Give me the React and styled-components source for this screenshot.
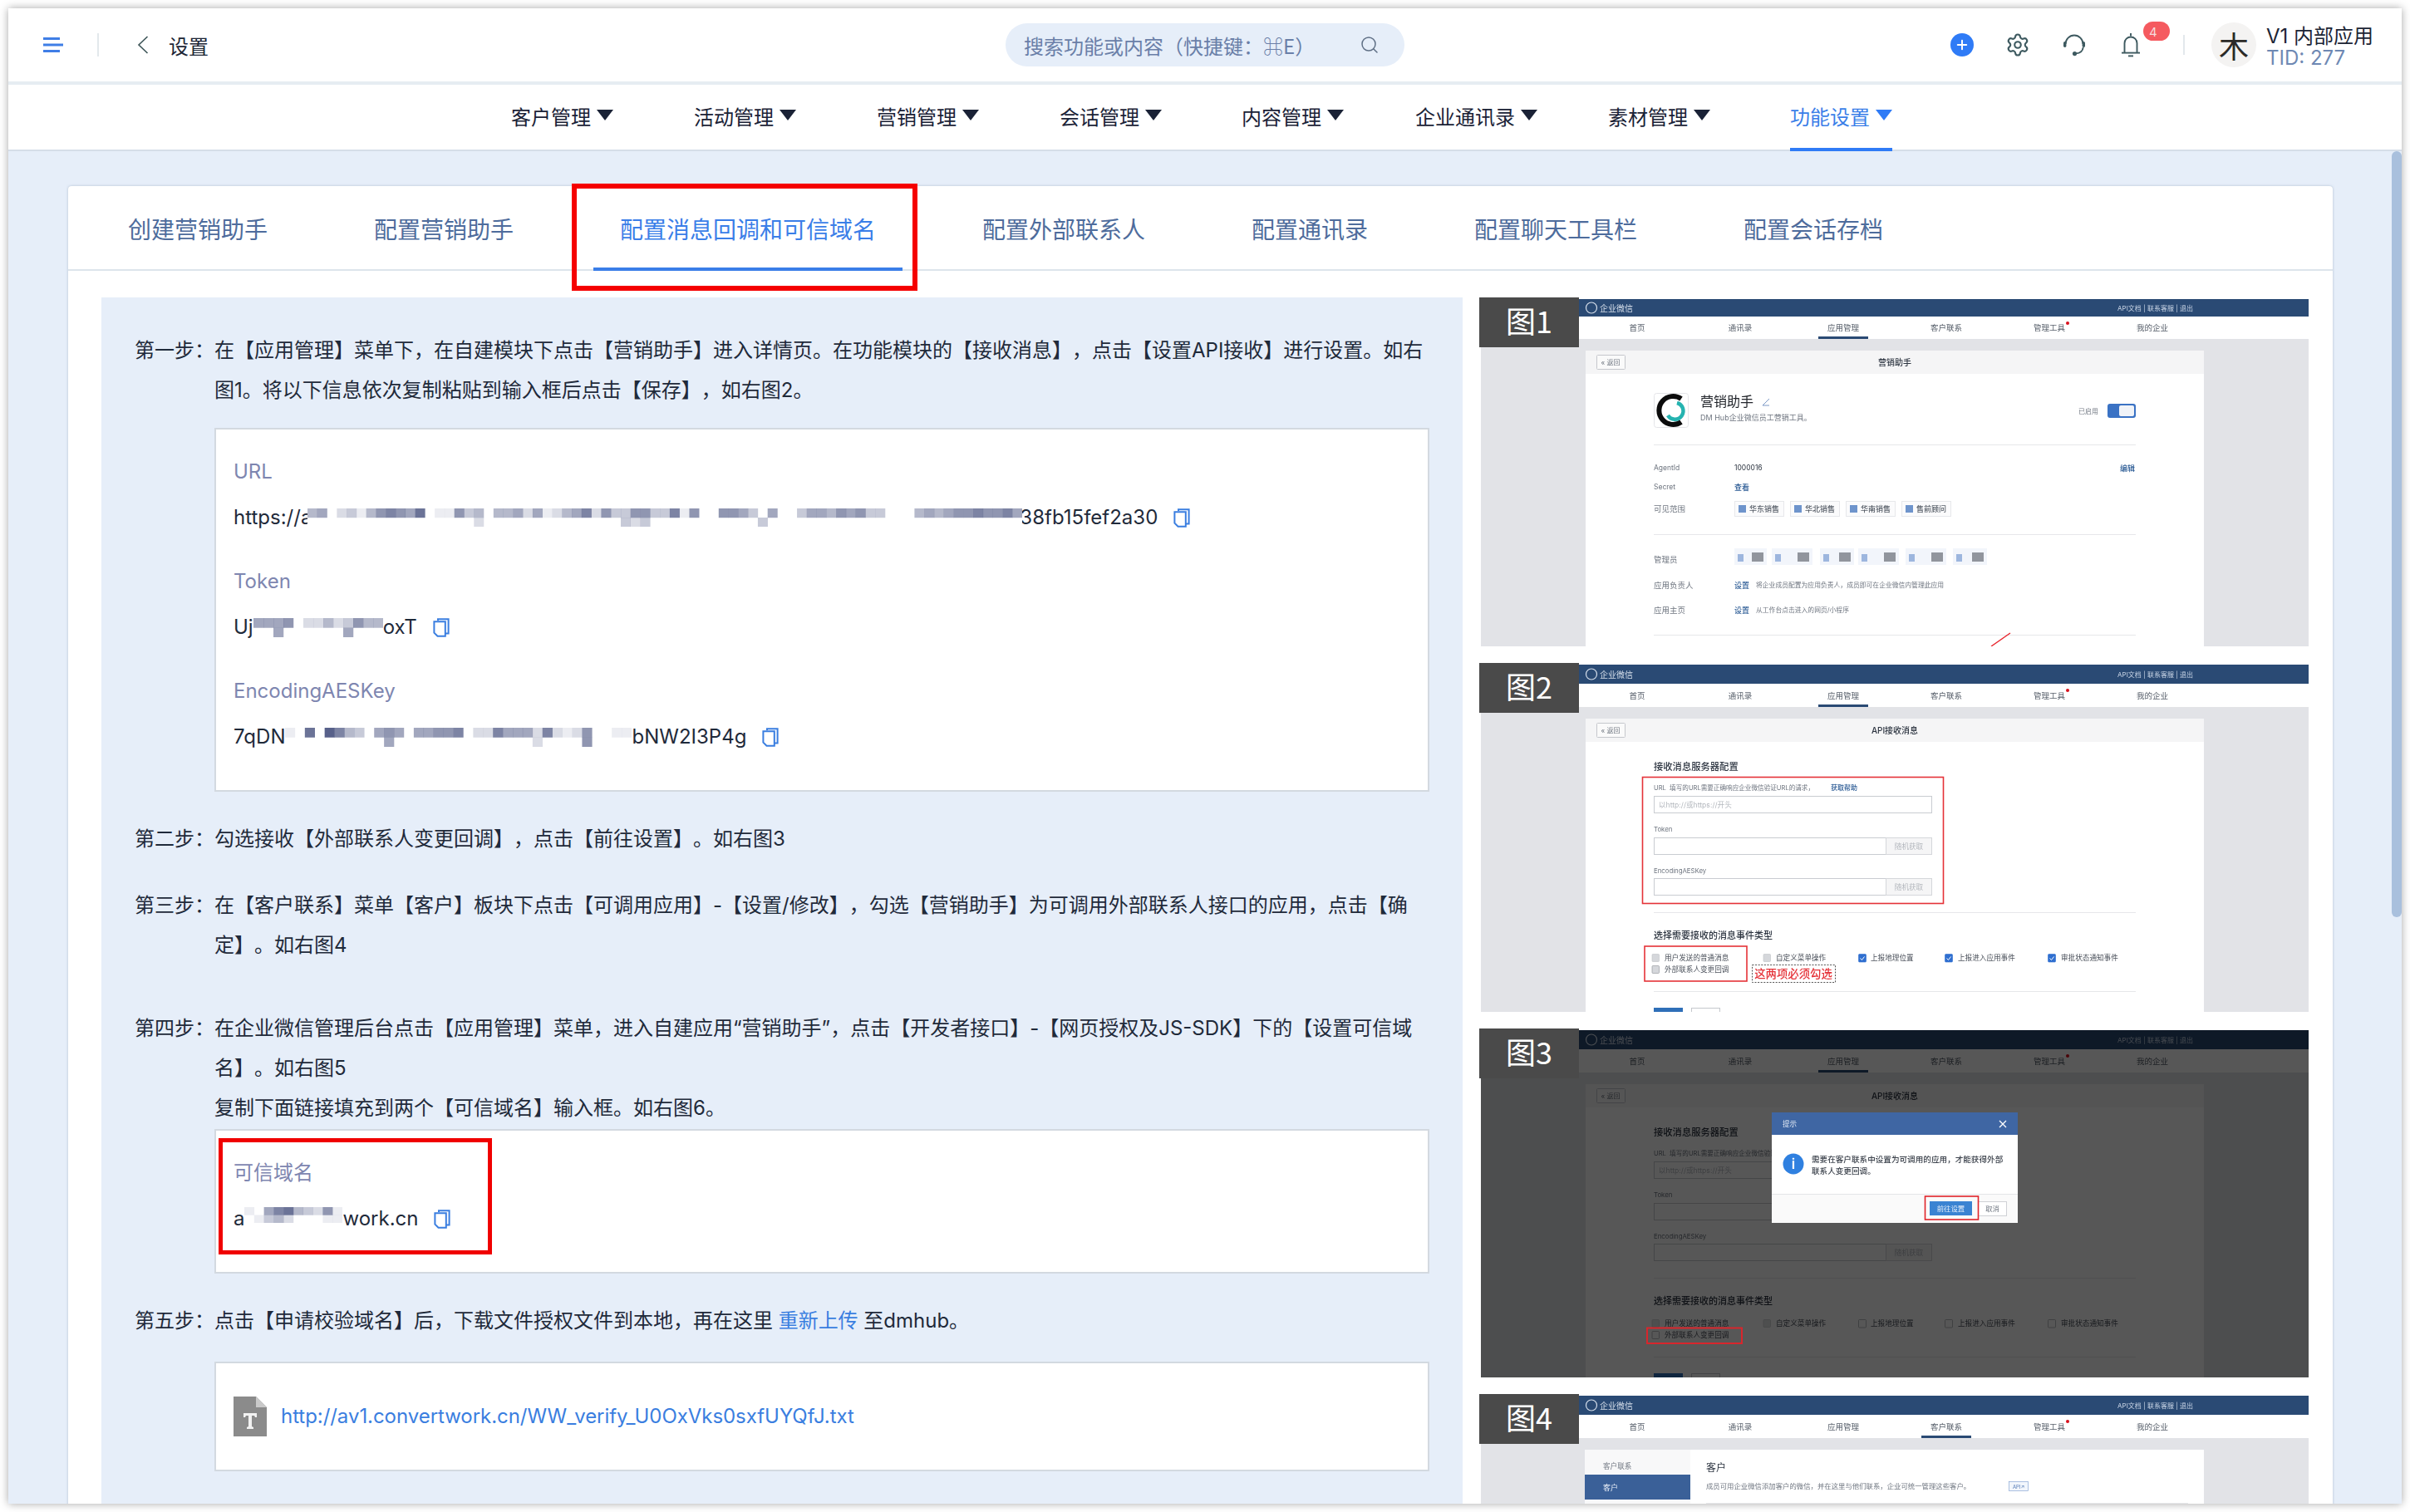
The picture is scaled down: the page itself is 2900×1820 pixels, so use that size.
import React from "react";
import styled, { createGlobalStyle } from "styled-components";
import { Search, Settings, Plus } from "lucide-react";

const FONT = `Inter, "Noto Sans CJK SC", sans-serif`;
const CJK = `"Noto Sans CJK SC", sans-serif`;

const Global = createGlobalStyle`
  html, body { margin: 0; padding: 0; background: #fff; }
  body { width: 2900px; height: 1820px; overflow: hidden; font-family: ${FONT}; text-spacing-trim: space-all; }
  * { box-sizing: border-box; }
`;

const Frame = styled.div`
  width: 2900px;
  height: 1820px;
  padding: 10px;
`;
const Window = styled.div`
  position: relative;
  width: 2880px;
  height: 1800px;
  overflow: hidden;
  background: #e6eef9;
  box-shadow: 0 0 10px rgba(0, 0, 0, 0.35);
  display: flex;
  flex-direction: column;
`;

/* top bar */
const Header = styled.header`
  height: 92px;
  flex: none;
  background: #fff;
  border-bottom: 4px solid #e6edf2;
  display: flex;
  align-items: center;
`;
const HeaderLeft = styled.div`
  flex: 1;
  display: flex;
  align-items: center;
`;
const MenuIcon = styled.svg`
  width: 24px;
  height: 18px;
  margin-left: 42px;
  flex: none;
`;
const Divider = styled.span`
  width: 2px;
  height: ${(p) => p.$h}px;
  margin-left: ${(p) => p.$left}px;
  background: #e3e8ec;
  flex: none;
`;
const BackIcon = styled.svg`
  width: 14px;
  height: 22px;
  margin-left: 46px;
  flex: none;
  fill: none;
  stroke: #3d5558;
  stroke-width: 1.6;
`;
const BackTitle = styled.span`
  font-size: 24px;
  color: #1c2535;
  margin-left: 24px;
`;
const SearchBox = styled.div`
  width: 480px;
  height: 52px;
  border-radius: 26px;
  background: #e6eef9;
  display: flex;
  align-items: center;
  justify-content: space-between;
  padding: 0 30px 0 22px;
  font-size: 24px;
  color: #6a7fa8;
  font-family: ${CJK};
`;
const HeaderRight = styled.div`
  flex: 1;
  display: flex;
  align-items: center;
  justify-content: flex-end;
`;
const IconSlot = styled.span`
  position: relative;
  width: 30px;
  height: 30px;
  margin-left: 38px;
  display: flex;
  align-items: center;
  justify-content: center;
  color: #3e5a60;
`;
const PlusDot = styled.span`
  width: 28px;
  height: 28px;
  border-radius: 50%;
  background: #2f7bf6;
  color: #fff;
  display: flex;
  align-items: center;
  justify-content: center;
`;
const Badge = styled.span`
  position: absolute;
  left: 30px;
  top: -13px;
  width: 32px;
  height: 23px;
  border-radius: 12px;
  background: #f55a5f;
  color: #f6dcdc;
  font-size: 15px;
  line-height: 25px;
  padding-left: 7px;
`;
const Avatar = styled.span`
  width: 54px;
  height: 54px;
  border-radius: 50%;
  background: #f4f3f2;
  margin: 0 12px 0 32px;
  display: flex;
  align-items: center;
  justify-content: center;
  font-family: ${CJK};
  font-size: 36px;
  color: #2b2a28;
`;
const User = styled.div`
  width: 134px;
  margin-right: 29px;
  padding-top: 6px;
  white-space: nowrap;
`;
const UserName = styled.div`
  font-size: 24px;
  line-height: 26px;
  color: #1c2535;
`;
const UserTid = styled.div`
  font-size: 24px;
  line-height: 26px;
  color: #6e88b3;
`;

/* section nav */
const Nav = styled.nav`
  height: 80px;
  flex: none;
  background: #fff;
  border-bottom: 2px solid #d5dee8;
  display: flex;
  padding-left: 605px;
`;
const NavItem = styled.div`
  height: 80px;
  margin-left: ${(p) => p.$gap}px;
  display: flex;
  align-items: center;
  gap: 7px;
  padding-bottom: 2px;
  font-family: ${CJK};
  font-size: 24px;
  color: ${(p) => (p.$active ? "#3a7ee8" : "#1a2236")};
  border-bottom: 4px solid ${(p) => (p.$active ? "#2f7bf6" : "transparent")};
`;
const Caret = styled.i`
  width: 0;
  height: 0;
  margin-top: -2px;
  border-left: 10px solid transparent;
  border-right: 10px solid transparent;
  border-top: 13px solid ${(p) => (p.$active ? "#2f7bf6" : "#1a2236")};
`;

/* main */
const Content = styled.main`
  flex: 1;
  padding: 42px 83px 0 72px;
`;
const Scrollbar = styled.div`
  position: absolute;
  right: 0;
  top: 172px;
  width: 12px;
  height: 922px;
  border-radius: 6px;
  background: #a9c0dd;
`;
const Card = styled.section`
  background: #fff;
  border-radius: 4px;
  box-shadow: 0 0 3px rgba(120, 140, 165, 0.5);
`;
const Tabs = styled.div`
  height: 102px;
  padding-left: 40px;
  display: flex;
  gap: 64px;
  box-shadow: inset 0 -2px 0 #dce5ec;
`;
const Tab = styled.div`
  position: relative;
  height: 102px;
  padding: 3px 32px 0;
  display: flex;
  align-items: center;
  font-family: ${CJK};
  font-size: 28px;
  white-space: nowrap;
  color: ${(p) => (p.$active ? "#3a7ee8" : "#4e6c9c")};
  border-bottom: 4px solid ${(p) => (p.$active ? "#3a7ee8" : "transparent")};
`;
const TabMark = styled.span`
  position: absolute;
  left: -26px;
  right: -18px;
  top: -3px;
  height: 129px;
  border: 6px solid #f50000;
  pointer-events: none;
`;
const Columns = styled.div`
  display: flex;
  gap: 20px;
  padding: 32px 0 0 40px;
`;
const Panel = styled.div`
  width: 1638px;
  height: 1500px;
  flex: none;
  background: #e6eef9;
  padding: 40px 40px 0;
  font-size: 24px;
  line-height: 48px;
  color: #1f2a3a;
  font-family: ${FONT};
`;
const Step = styled.div`
  display: flex;
  margin-top: ${(p) => p.$top || 0}px;
  white-space: nowrap;
`;
const StepLabel = styled.span`
  width: 96px;
  flex: none;
`;
const StepBody = styled.div`
  flex: 1;
`;
const Link = styled.a`
  color: #3a7ee0;
  letter-spacing: -0.05px;
`;
const InfoBox = styled.div`
  position: relative;
  margin: ${(p) => p.$top}px 0 0 96px;
  width: 1462px;
  height: ${(p) => p.$h}px;
  background: #fff;
  border: 2px solid #d3d9e0;
  padding: ${(p) => p.$pad}px 21px 0;
`;
const Field = styled.div`
  height: 132px;
`;
const FieldLabel = styled.div`
  height: 24px;
  line-height: 24px;
  margin-bottom: 31px;
  color: #7e86b0;
  white-space: nowrap;
`;
const FieldValue = styled.div`
  display: flex;
  align-items: center;
  height: 24px;
  line-height: 24px;
  color: #1f2a3a;
  white-space: nowrap;
`;
const CopyBtn = styled.svg`
  width: 20px;
  height: 23px;
  margin-left: 19px;
  flex: none;
  fill: none;
  stroke: #3a7ee0;
  stroke-width: 2;
`;
const Blurred = styled.svg`
  position: relative;
  flex: none;
  display: block;
  width: ${(p) => p.$w}px;
  height: ${(p) => p.$h}px;
  margin: ${(p) => p.$lift || 0}px ${(p) => p.$after || 0}px 0 ${(p) => p.$before || 0}px;
  background: #fff;
  filter: blur(0.6px);
`;
const DomainMark = styled.span`
  position: absolute;
  left: 3px;
  top: 9px;
  width: 329px;
  height: 140px;
  border: 5px solid #f00000;
  pointer-events: none;
`;
const FileRow = styled.div`
  display: flex;
  align-items: center;
  gap: 17px;
  line-height: 48px;
`;
const FileIcon = styled.svg`
  width: 40px;
  height: 48px;
  flex: none;
`;

/* captioned figures */
const Figures = styled.div`
  display: flex;
  flex-direction: column;
  gap: 22px;
  padding: 2px 0 0 2px;
`;
const Figure = styled.figure`
  position: relative;
  margin: 0;
  width: 996px;
  height: 418px;
  flex: none;
`;
const FigureTag = styled.figcaption`
  position: absolute;
  left: -2px;
  top: -2px;
  width: 120px;
  height: 60px;
  background: #4a4a4a;
  color: #fff;
  font-family: ${CJK};
  font-size: 36px;
  line-height: 54px;
  text-align: center;
`;
const Shot = styled.svg`
  display: block;
  width: 996px;
  height: 418px;
  filter: blur(0.5px);
`;
const T = styled.text`
  font-family: ${FONT};
  font-size: ${(p) => p.$s || 8.5}px;
  font-weight: ${(p) => p.$w || 400};
  fill: ${(p) => p.$c || "#6f7680"};
  text-anchor: ${(p) => p.$a || "start"};
  dominant-baseline: central;
`;

const NAV = [
  ["客户管理", 0],
  ["活动管理", 97],
  ["营销管理", 97],
  ["会话管理", 97],
  ["内容管理", 96],
  ["企业通讯录", 86],
  ["素材管理", 85],
  ["功能设置", 96, true],
];
const TABS = ["创建营销助手", "配置营销助手", "配置消息回调和可信域名", "配置外部联系人", "配置通讯录", "配置聊天工具栏", "配置会话存档"];

// pixelated redaction block; every digit is the darkness of one cell
function Mosaic({ rows, w, h, lift, before, after }) {
  const cols = Math.max(...rows.map((r) => r.length));
  return (
    <Blurred $w={w} $h={h} $lift={lift} $before={before} $after={after} viewBox={`0 0 ${cols} ${rows.length}`} preserveAspectRatio="none">
      {rows.map((row, y) =>
        row.split("").map((d, x) =>
          d === "0" ? null : <rect key={`${x}-${y}`} x={x} y={y} width="1.02" height="1.02" fill="#46507d" fillOpacity={+d / 10} />
        )
      )}
    </Blurred>
  );
}

function CopyIcon() {
  return (
    <CopyBtn viewBox="0 0 20 23">
      <path d="M6 3V1.2h12.6v17.4H15" />
      <path d="M1.4 4.2h13.4v17.6H5.5L1.4 17.6z" />
    </CopyBtn>
  );
}

const SHOT_NAV = ["首页", "通讯录", "应用管理", "客户联系", "管理工具", "我的企业"];
const SHOT_X = [188, 312, 436, 560, 684, 808];

// the shared chrome of the admin console shown in each figure
function ConsoleChrome({ barH, navEnd, active, title, panelTop, headEnd, showPanel = true }) {
  const textY = (barH + navEnd) / 2;
  return (
    <>
      <rect width="996" height="418" fill="#e2e3e7" />
      <rect width="996" height={barH} fill="#2a4a74" />
      <rect y={barH} width="996" height={navEnd - barH} fill="#fff" />
      <circle cx="133" cy={barH / 2} r="6.5" fill="none" stroke="#d5deea" strokeWidth="1.2" />
      <T x="143" y={barH / 2} $s={10} $c="#d5deea">企业微信</T>
      <T x="766" y={barH / 2} $s={8} $c="#c9d5e6">API文档 | 联系客服 | 退出</T>
      {SHOT_NAV.map((n, i) => (
        <T key={n} x={SHOT_X[i]} y={textY} $s={9.5} $a="middle" $c="#58606b">{n}</T>
      ))}
      <circle cx="706" cy={barH + 8} r="2" fill="#d8101c" />
      <rect x={SHOT_X[active] - 30} y={navEnd - 3} width="60" height="3" fill="#2a4a74" />
      {showPanel && (
        <>
          <rect x="126" y={panelTop} width="744" height={418 - panelTop} fill="#fff" />
          <rect x="126" y={panelTop} width="744" height={headEnd - panelTop} fill="#f5f5f6" />
          <rect x="139.5" y={panelTop + 5.5} width="34" height="17" rx="1" fill="#fafafa" stroke="#c5c7cc" />
          <T x="156" y={panelTop + 14} $s={8} $a="middle">« 返回</T>
          <T x="498" y={panelTop + 14} $s={10} $a="middle" $c="#2c3440" $w={500}>{title}</T>
        </>
      )}
    </>
  );
}

function Hr({ y }) {
  return <rect x="208" y={y} width="580" height="1" fill="#e6e7ea" />;
}

function AssistantPage() {
  const chips = [[305, "华东销售"], [372, "华北销售"], [439, "华南销售"], [506, "售前顾问"]];
  const admins = [[305, 39], [350, 49], [408, 41], [454, 49], [511, 49], [568, 41]];
  return (
    <Shot viewBox="0 0 996 418">
      <ConsoleChrome barH={21} navEnd={48} active={2} title="营销助手" panelTop={62} headEnd={90} />
      <rect x="208.5" y="113.5" width="41" height="41" rx="3" fill="#fff" stroke="#e4e5e8" />
      <path d="M241 120a17 17 0 1 0 0 28" fill="none" stroke="#0c0c0c" strokeWidth="6" />
      <path d="M236 125a10 10 0 1 1-11 15" fill="none" stroke="#25b3b0" strokeWidth="4.5" />
      <T x="264" y="123" $s={16} $c="#23262c">营销助手</T>
      <path d="M339 128l8-8M339 128h8" stroke="#5a7fb8" strokeWidth="0.8" />
      <T x="264" y="142" $s={9}>DM Hub企业微信员工营销工具。</T>
      <T x="719" y="135" $s={8}>已启用</T>
      <rect x="754" y="126" width="34" height="17" rx="3" fill="#3a72c4" />
      <rect x="768" y="128" width="18" height="13" rx="2" fill="#f0f3f8" />
      <Hr y={175} />
      <T x="208" y="203" $s={8.5}>AgentId</T>
      <T x="305" y="203" $s={8.5} $c="#2c3440">1000016</T>
      <T x="769" y="203" $s={9} $c="#2a5a94" $w={500}>编辑</T>
      <T x="208" y="226" $s={8.5}>Secret</T>
      <T x="305" y="226" $s={9} $c="#2a5a94" $w={500}>查看</T>
      <T x="208" y="252" $s={9.5}>可见范围</T>
      {chips.map(([x, label]) => (
        <g key={label}>
          <rect x={x + 0.5} y="243.5" width="59" height="18" fill="#fbfbfc" stroke="#e7e8eb" />
          <rect x={x + 5} y="248" width="9" height="9" fill="#6e94cc" />
          <T x={x + 18} y="252.5" $s={9} $c="#555c66" $w={500}>{label}</T>
        </g>
      ))}
      <Hr y={283} />
      <T x="208" y="313" $s={9.5}>管理员</T>
      {admins.map(([x, w]) => (
        <g key={x}>
          <rect x={x} y="300" width={w} height="20" fill="#f2f5fb" />
          <rect x={x + 4} y="307" width="7" height="9" fill="#9db6de" />
          <rect x={x + w - 18} y="305" width="14" height="11" fill="#70747d" opacity="0.75" />
        </g>
      ))}
      <T x="208" y="344" $s={9.5}>应用负责人</T>
      <T x="305" y="344" $s={9} $c="#2a5a94" $w={500}>设置</T>
      <T x="331" y="344" $s={7.8}>将企业成员配置为应用负责人，成员即可在企业微信内管理此应用</T>
      <T x="208" y="374" $s={9.5}>应用主页</T>
      <T x="305" y="374" $s={9} $c="#2a5a94" $w={500}>设置</T>
      <T x="331" y="374" $s={7.8}>从工作台点击进入的网页/小程序</T>
      <Hr y={404} />
      <path d="M637 402L614 418" stroke="#e8232b" strokeWidth="1.4" />
    </Shot>
  );
}

// API form used by figures 2 and 3; `ticked` tells which event boxes are on
function ApiForm({ ticked }) {
  const events = [
    [459, 469, "上报地理位置"],
    [563, 574, "上报进入应用事件"],
    [687, 698, "审批状态通知事件"],
  ];
  return (
    <>
      <T x="208" y="123" $s={11.3} $c="#2c3440" $w={500}>接收消息服务器配置</T>
      <T x="208" y="148" $s={7.6}>URL&nbsp; 填写的URL需要正确响应企业微信验证URL的请求，</T>
      <T x="421" y="148" $s={8} $c="#2a5a94" $w={500}>获取帮助</T>
      <rect x="208.5" y="158.5" width="334" height="20" fill="#fff" stroke="#c9ccd1" />
      <T x="214" y="169" $s={8.6} $c="#b4b8be">以http://或https://开头</T>
      <T x="208" y="198" $s={7.8}>Token</T>
      <rect x="208.5" y="208.5" width="334" height="20" fill="#fff" stroke="#c9ccd1" />
      <rect x="487.5" y="208.5" width="55" height="20" fill="#f5f5f6" stroke="#d5d7db" />
      <T x="515" y="219" $s={8.6} $a="middle" $c="#b4b8be">随机获取</T>
      <T x="208" y="248" $s={7.8}>EncodingAESKey</T>
      <rect x="208.5" y="257.5" width="334" height="20" fill="#fff" stroke="#c9ccd1" />
      <rect x="487.5" y="257.5" width="55" height="20" fill="#f5f5f6" stroke="#d5d7db" />
      <T x="515" y="268" $s={8.6} $a="middle" $c="#b4b8be">随机获取</T>
      <Hr y={298} />
      <T x="208" y="326" $s={11} $c="#2c3440" $w={500}>选择需要接收的消息事件类型</T>

      <rect x="206" y="348.5" width="8.5" height="9" rx="1" fill={ticked ? "#d5d7db" : "#e5e6e8"} stroke="#c0c2c6" strokeWidth="0.6" />
      <T x="221" y="353" $s={8.6} $c="#4a505a">用户发送的普通消息</T>
      <rect x="206" y="362.5" width="8.5" height="9" rx="1" fill={ticked ? "#d5d7db" : "#fff"} stroke="#8b8e93" strokeWidth="0.6" />
      <T x="221" y="367" $s={8.6} $c="#4a505a">外部联系人变更回调</T>
      <rect x="340" y="348.5" width="8.5" height="9" rx="1" fill={ticked ? "#d5d7db" : "#e5e6e8"} stroke="#c0c2c6" strokeWidth="0.6" />
      <T x="355" y="353" $s={8.6} $c="#4a505a">自定义菜单操作</T>
      {events.map(([bx, tx, label]) => (
        <g key={label}>
          <rect x={bx - 4.5} y="348.5" width="9" height="9.5" rx="1" fill={ticked ? "#2f6fd0" : "#fff"} stroke={ticked ? "#2f6fd0" : "#8b8e93"} strokeWidth="0.6" />
          {ticked && <path d={`M${bx - 2.5} 353.5l2 2 3-4`} stroke="#fff" fill="none" strokeWidth="1" />}
          <T x={tx} y="353" $s={8.6} $c="#4a505a">{label}</T>
        </g>
      ))}
      <Hr y={393} />
      <rect x="208" y="413" width="35" height="8" fill="#2f6fb8" />
      <rect x="253.5" y="413.5" width="34" height="8" fill="#fff" stroke="#c5c7cc" />
    </>
  );
}

function ApiPage() {
  return (
    <Shot viewBox="0 0 996 418">
      <ConsoleChrome barH={23} navEnd={51} active={2} title="API接收消息" panelTop={65} headEnd={93} />
      <ApiForm ticked />
      <rect x="194.5" y="135.5" width="362" height="152" fill="none" stroke="#e53238" strokeWidth="1.6" />
      <rect x="197" y="339" width="123" height="42" fill="none" stroke="#e53238" strokeWidth="1.6" />
      <rect x="326.5" y="361.5" width="100" height="21" fill="none" stroke="#555" strokeWidth="1" strokeDasharray="2 1.6" />
      <T x="376" y="372" $s={13.4} $a="middle" $c="#e53238" $w={500}>这两项必须勾选</T>
    </Shot>
  );
}

function DialogPage() {
  return (
    <Shot viewBox="0 0 996 418">
      <ConsoleChrome barH={23} navEnd={51} active={2} title="API接收消息" panelTop={65} headEnd={93} />
      <ApiForm />
      <rect width="996" height="418" fill="#000" fillOpacity="0.66" />
      <rect x="200" y="358.5" width="114" height="18.5" fill="none" stroke="#d8262c" strokeWidth="2" />
      <rect x="350" y="99" width="296" height="133" fill="#fff" />
      <rect x="350" y="99" width="296" height="27" fill="#3f66a3" />
      <T x="363" y="113" $s={8.6} $c="#dfe7f3">提示</T>
      <path d="M624 109l8 8M632 109l-8 8" stroke="#fff" strokeWidth="1.3" />
      <circle cx="376" cy="161" r="12.5" fill="#2f80e0" />
      <T x="376" y="161" $s={17} $a="middle" $c="#fff" $w={600}>i</T>
      <T x="398" y="155" $s={9.6} $c="#3c424c" $w={500}>需要在客户联系中设置为可调用的应用，才能获得外部</T>
      <T x="398" y="169" $s={9.6} $c="#3c424c" $w={500}>联系人变更回调。</T>
      <rect x="350" y="197" width="296" height="35" fill="#fafafa" />
      <rect x="350" y="197" width="296" height="1" fill="#e4e5e8" />
      <rect x="540" y="206" width="51" height="17" fill="#3a83d2" />
      <T x="565.5" y="214.5" $s={8.4} $a="middle" $c="#e5effa">前往设置</T>
      <rect x="598.5" y="206.5" width="34" height="17" fill="#fff" stroke="#cfd1d5" />
      <T x="615.5" y="215" $s={8.4} $a="middle">取消</T>
      <rect x="534.5" y="200" width="64" height="28" fill="none" stroke="#e0242a" strokeWidth="1.6" />
    </Shot>
  );
}

function CustomerPage() {
  return (
    <Shot viewBox="0 0 996 418">
      <ConsoleChrome barH={23} navEnd={51} active={3} showPanel={false} />
      <rect x="125" y="65" width="745" height="353" fill="#fff" />
      <rect x="125" y="65" width="127" height="353" fill="#f8f8f9" />
      <T x="147" y="85" $s={8.6}>客户联系</T>
      <rect x="125" y="95" width="127" height="30" fill="#3a6098" />
      <T x="147" y="110" $s={9} $c="#e8eef7">客户</T>
      <T x="271" y="86" $s={12} $c="#2c3440">客户</T>
      <T x="271" y="109" $s={8.4}>成员可用企业微信添加客户的微信，并在这里与他们联系，企业可统一管理这些客户。</T>
      <rect x="635.5" y="103.5" width="23" height="11" fill="#f2f6fc" stroke="#8aa7d4" strokeWidth="0.7" />
      <T x="647" y="109.5" $s={6} $a="middle" $c="#5a7fb8">API↗</T>
      <rect x="271" y="129" width="580" height="1" fill="#e6e7ea" />
    </Shot>
  );
}

const URL_ROWS = [
  "4502314676580116340445251245726336633716006653050035546563300045456676675",
  "0".repeat(17) + "2" + "0".repeat(14) + "323" + "0".repeat(11) + "3" + "0".repeat(26),
];
const TOKEN_ROWS = ["5556022423644", "0050000005000"];
const KEY_ROWS = [
  "10809743056505566702275552721260011",
  "0".repeat(10) + "5" + "0".repeat(14) + "2" + "0000" + "6" + "0000",
];
const DOMAIN_ROWS = ["1057843261", "0134200011"];

export default function App() {
  return (
    <Frame>
      <Global />
      <Window>
        <Header>
          <HeaderLeft>
            <MenuIcon viewBox="0 0 24 18">
              <path d="M0 1.5h20M0 9h24M0 16.5h20" stroke="#3f7ee6" strokeWidth="3" />
            </MenuIcon>
            <Divider $h={28} $left={41} />
            <BackIcon viewBox="0 0 14 22">
              <path d="M12.5 1L2 11l10.5 10" />
            </BackIcon>
            <BackTitle>设置</BackTitle>
          </HeaderLeft>
          <SearchBox>
            <span>搜索功能或内容（快捷键：⌘E）</span>
            <Search size={24} strokeWidth={1.5} color="#5f6f85" />
          </SearchBox>
          <HeaderRight>
            <PlusDot>
              <Plus size={18} strokeWidth={2.6} />
            </PlusDot>
            <IconSlot>
              <Settings size={30} strokeWidth={1.7} />
            </IconSlot>
            <IconSlot>
              <svg width="30" height="30" viewBox="0 0 30 30" fill="none" stroke="currentColor" strokeWidth="1.9">
                <path d="M4.5 14a10.5 10.5 0 0 1 21 0" />
                <rect x="2" y="11" width="3.4" height="7" rx="1.7" fill="currentColor" stroke="none" />
                <rect x="24.6" y="11" width="3.4" height="7" rx="1.7" fill="currentColor" stroke="none" />
                <path d="M25.7 18c-.4 4-3.7 7-8.7 7.4" />
                <circle cx="15.5" cy="25.6" r="2.6" fill="currentColor" stroke="none" />
              </svg>
            </IconSlot>
            <IconSlot>
              <svg width="24" height="30" viewBox="0 0 24 30" fill="none" stroke="currentColor" strokeWidth="1.9">
                <path d="M12 1v3.4" />
                <path d="M4.5 24V13a7.5 7.5 0 0 1 15 0v11" />
                <path d="M1 24.6h22" />
                <path d="M9 28.4h6" />
              </svg>
              <Badge>4</Badge>
            </IconSlot>
            <Divider $h={24} $left={48} />
            <Avatar>木</Avatar>
            <User>
              <UserName>V1 内部应用</UserName>
              <UserTid>TID: 277</UserTid>
            </User>
          </HeaderRight>
        </Header>
        <Nav>
          {NAV.map(([label, gap, active]) => (
            <NavItem key={label} $gap={gap} $active={active}>
              {label}
              <Caret $active={active} />
            </NavItem>
          ))}
        </Nav>
        <Content>
          <Card>
            <Tabs>
              {TABS.map((t, i) => (
                <Tab key={t} $active={i === 2}>
                  {t}
                  {i === 2 && <TabMark />}
                </Tab>
              ))}
            </Tabs>
            <Columns>
              <Panel>
                <Step>
                  <StepLabel>第一步：</StepLabel>
                  <StepBody>
                    在【应用管理】菜单下，在自建模块下点击【营销助手】进入详情页。在功能模块的【接收消息】，点击【设置API接收】进行设置。如右
                    <br />
                    图1。将以下信息依次复制粘贴到输入框后点击【保存】，如右图2。
                  </StepBody>
                </Step>
                <InfoBox $top={21} $h={438} $pad={39}>
                  <Field>
                    <FieldLabel>URL</FieldLabel>
                    <FieldValue>
                      https://a
                      <Mosaic rows={URL_ROWS} w={860} h={22} before={-5} after={-3} />
                      38fb15fef2a30
                      <CopyIcon />
                    </FieldValue>
                  </Field>
                  <Field>
                    <FieldLabel>Token</FieldLabel>
                    <FieldValue>
                      Uj
                      <Mosaic rows={TOKEN_ROWS} w={156} h={23} />
                      oxT
                      <CopyIcon />
                    </FieldValue>
                  </Field>
                  <Field>
                    <FieldLabel>EncodingAESKey</FieldLabel>
                    <FieldValue>
                      7qDN
                      <Mosaic rows={KEY_ROWS} w={417} h={23} />
                      bNW2I3P4g
                      <CopyIcon />
                    </FieldValue>
                  </Field>
                </InfoBox>
                <Step $top={33}>
                  <StepLabel>第二步：</StepLabel>
                  <StepBody>勾选接收【外部联系人变更回调】，点击【前往设置】。如右图3</StepBody>
                </Step>
                <Step $top={32}>
                  <StepLabel>第三步：</StepLabel>
                  <StepBody>
                    在【客户联系】菜单【客户】板块下点击【可调用应用】-【设置/修改】，勾选【营销助手】为可调用外部联系人接口的应用，点击【确
                    <br />
                    定】。如右图4
                  </StepBody>
                </Step>
                <Step $top={52}>
                  <StepLabel>第四步：</StepLabel>
                  <StepBody>
                    在企业微信管理后台点击【应用管理】菜单，进入自建应用“营销助手”，点击【开发者接口】-【网页授权及JS-SDK】下的【设置可信域
                    <br />
                    名】。如右图5
                    <br />
                    复制下面链接填充到两个【可信域名】输入框。如右图6。
                  </StepBody>
                </Step>
                <InfoBox $top={1} $h={174} $pad={39}>
                  <DomainMark />
                  <FieldLabel>可信域名</FieldLabel>
                  <FieldValue>
                    a
                    <Mosaic rows={DOMAIN_ROWS} w={118} h={19} lift={-10} />
                    work.cn
                    <CopyIcon />
                  </FieldValue>
                </InfoBox>
                <Step $top={33}>
                  <StepLabel>第五步：</StepLabel>
                  <StepBody>
                    点击【申请校验域名】后，下载文件授权文件到本地，再在这里 <Link>重新上传</Link> 至dmhub。
                  </StepBody>
                </Step>
                <InfoBox $top={25} $h={132} $pad={40}>
                  <FileRow>
                    <FileIcon viewBox="0 0 40 48">
                      <path d="M0 0h27l13 13v35H0z" fill="#8b8b8b" />
                      <path d="M27 0l13 13H27z" fill="#c9c9c9" />
                      <path d="M12 20h16v5h-2l-1-2h-3v13l2 1v2h-8v-2l2-1V23h-3l-1 2h-2z" fill="#f2f2f2" />
                    </FileIcon>
                    <Link>http://av1.convertwork.cn/WW_verify_U0OxVks0sxfUYQfJ.txt</Link>
                  </FileRow>
                </InfoBox>
              </Panel>
              <Figures>
                <Figure>
                  <AssistantPage />
                  <FigureTag>图1</FigureTag>
                </Figure>
                <Figure>
                  <ApiPage />
                  <FigureTag>图2</FigureTag>
                </Figure>
                <Figure>
                  <DialogPage />
                  <FigureTag>图3</FigureTag>
                </Figure>
                <Figure>
                  <CustomerPage />
                  <FigureTag>图4</FigureTag>
                </Figure>
              </Figures>
            </Columns>
          </Card>
        </Content>
        <Scrollbar />
      </Window>
    </Frame>
  );
}
